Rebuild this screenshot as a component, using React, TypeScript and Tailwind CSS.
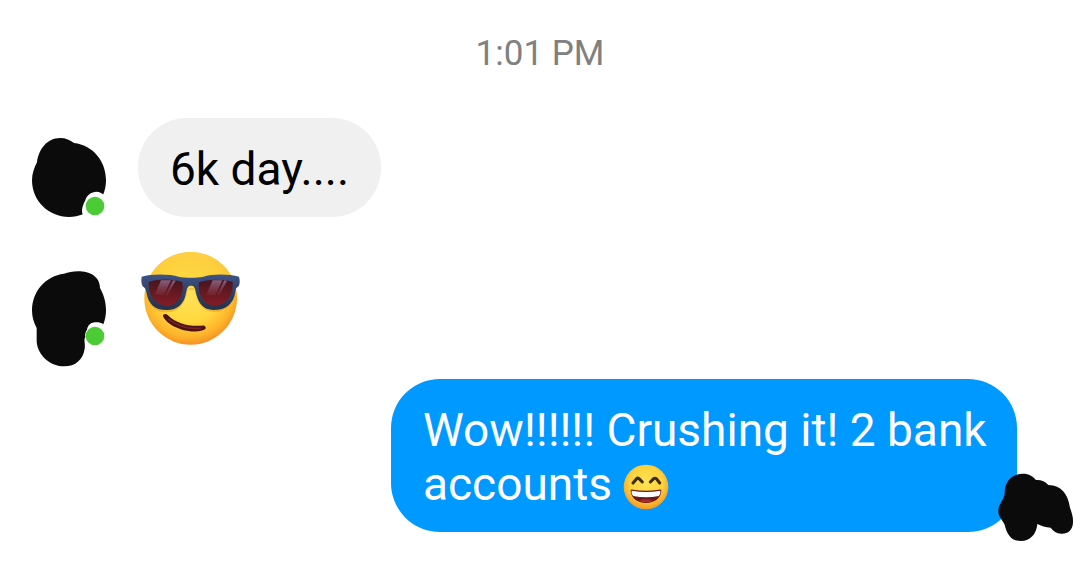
import type { ReactNode } from 'react';

function RoundAvatar() {
  return (
    <svg viewBox="36 36 222 240" className="w-[74px] h-20 shrink-0" role="img" aria-label="Contact, online">
      <path
        fill="#0b0b0b"
        d="M51 112C56 72 82 39 120 39C138 39 150 45 162 54C218 60 258 108 258 166C258 230 207 276 147 276C86 276 36 228 36 166C36 146 43 128 51 112Z"
      />
      <path fill="#fff" d="M196 226C201 208 215 201 229 200C239 200 246 205 251 209L262 220V280H186L188 268C184 258 186 244 196 226Z" />
      <circle cx="225" cy="243" r="28" fill="#4ccb36" />
    </svg>
  );
}

function LongAvatar() {
  return (
    <svg viewBox="36 30 222 294" className="w-[74px] h-[98px] shrink-0" role="img" aria-label="Contact, online">
      <path
        fill="#0b0b0b"
        d="M50 204C41 188 36 170 36 151C36 94 77 48 132 41C145 37 158 34 174 34C210 34 240 50 240 84C251 103 258 126 258 151C258 166 255 180 250 193C242 187 230 186 218 188C208 190 203 199 201 209C196 216 194 224 196 231C190 240 197 252 194 266C190 298 166 319 133 319C91 319 53 286 50 245Z"
      />
      <circle cx="225" cy="228" r="28" fill="#4ccb36" />
    </svg>
  );
}

function SentAvatar() {
  return (
    <svg viewBox="36 39 231 207" className="w-[77px] h-[69px]" role="img" aria-label="Seen">
      <path
        fill="#0b0b0b"
        d="M59 96C60 62 84 41 115 41C131 41 144 49 153 60C168 59 180 64 190 75C230 76 249 103 255 143C260 158 265 172 264 188C263 210 248 222 229 221C215 220 204 213 197 203C182 202 168 198 157 192C154 223 136 243 108 243C80 243 66 225 59 194C54 184 47 176 42 166C37 149 42 135 51 122C57 113 59 105 59 96Z"
      />
    </svg>
  );
}

function SunglassesEmoji() {
  return (
    <svg viewBox="24 15 306 288" className="w-[102px] h-24" role="img" aria-label="Smiling face with sunglasses">
      <defs>
        <radialGradient id="sunFace" cx="0.48" cy="0.42" r="0.6">
          <stop offset="0" stopColor="#ffe45c" />
          <stop offset="0.55" stopColor="#ffd83f" />
          <stop offset="0.82" stopColor="#fdb52b" />
          <stop offset="1" stopColor="#f58a20" />
        </radialGradient>
        <linearGradient id="sunTop" x1="0" y1="0" x2="0" y2="1">
          <stop offset="0" stopColor="#fdd045" />
          <stop offset="0.5" stopColor="#fccb2e" stopOpacity="0" />
        </linearGradient>
        <linearGradient id="lens" x1="0" y1="0" x2="0" y2="1">
          <stop offset="0" stopColor="#46151f" />
          <stop offset="1" stopColor="#851c24" />
        </linearGradient>
        <linearGradient id="frame" x1="0" y1="0" x2="0" y2="1">
          <stop offset="0" stopColor="#3d5488" />
          <stop offset="0.35" stopColor="#35456c" />
          <stop offset="1" stopColor="#27324a" />
        </linearGradient>
        <linearGradient id="glare" x1="0" y1="0" x2="0" y2="1">
          <stop offset="0" stopColor="#94749a" stopOpacity="0.8" />
          <stop offset="1" stopColor="#9b4a55" stopOpacity="0.2" />
        </linearGradient>
      </defs>
      <circle cx="182" cy="160" r="139" fill="url(#sunFace)" />
      <circle cx="182" cy="160" r="139" fill="url(#sunTop)" />
      <path
        fill="#d58b22"
        opacity="0.4"
        d="M46 134C51 172 68 202 111 202C145 202 166 178 173 136C179 126 190 126 195 136C202 178 220 201 252 201C289 201 312 174 318 134Z"
      />
      <path
        fill="url(#frame)"
        d="M35 95C62 86 120 86 146 95C164 99 202 99 220 95C245 86 300 87 327 95C330 105 330 116 326 124C319 127 317 132 316 140C311 176 288 195 250 195C220 195 205 175 198 145C195 124 190 122 183 122C175 122 171 127 168 144C162 178 142 195 111 195C72 195 55 176 49 140C47 132 44 127 38 124C34 116 33 105 35 95Z"
      />
      <path fill="url(#lens)" d="M56 111C84 101 132 101 157 112C163 143 147 181 112 182C75 181 55 151 56 111Z" />
      <path fill="url(#lens)" d="M207 112C233 101 282 102 308 111C310 151 289 181 253 182C219 181 202 143 207 112Z" />
      <path fill="url(#glare)" d="M93 106L123 106L101 151L75 148ZM129 106L137 107L112 151L106 151Z" />
      <path fill="url(#glare)" d="M248 106L277 106L256 151L229 149ZM283 106L291 108L267 151L261 151Z" />
      <path
        fill="#4a1416"
        d="M99 214C98 207 108 205 113 210C139 236 177 245 215 242C224 240 230 247 226 252C216 261 185 262 156 254C131 247 107 232 99 214Z"
      />
      <path d="M116 223Q158 254 211 250" fill="none" stroke="#79221d" strokeWidth="5" strokeLinecap="round" />
    </svg>
  );
}

function GrinEmoji() {
  return (
    <svg viewBox="26 25 138 138" className="inline-block w-[46px] h-[46px] align-[-10px]" role="img" aria-label="Grinning face">
      <defs>
        <radialGradient id="grinFace" cx="0.5" cy="0.4" r="0.62">
          <stop offset="0" stopColor="#ffe354" />
          <stop offset="0.6" stopColor="#fdd13c" />
          <stop offset="1" stopColor="#f29423" />
        </radialGradient>
      </defs>
      <circle cx="95" cy="94" r="67" fill="url(#grinFace)" />
      <path
        d="M56 82L67 69Q70 66 74 69L84 79M108 79L118 69Q122 66 126 69L136 82"
        fill="none"
        stroke="#3a2c18"
        strokeWidth="9"
        strokeLinecap="round"
        strokeLinejoin="round"
      />
      <path fill="#681b1b" d="M49 107C48 102 52 101 56 102C82 106 108 106 134 102C139 101 142 103 141 107C139 128 121 142 95 142C69 142 51 128 49 107Z" />
      <path fill="#fff" d="M52 105C80 110 110 110 138 105C139 112 137 117 133 121C108 126 82 126 57 121C53 117 51 112 52 105Z" />
      <path fill="#ae292b" d="M73 135Q95 127 117 135Q95 144 73 135Z" />
    </svg>
  );
}

function Bubble({ sent = false, children }: { sent?: boolean; children: ReactNode }) {
  return (
    <p
      className={`rounded-[49px] pl-8 pt-6 pb-[21px] text-[46px] leading-[54px] ${
        sent ? 'pr-6 bg-[#0099ff] text-white' : 'pr-8 bg-[#f0f0f0] text-black'
      }`}
    >
      {children}
    </p>
  );
}

export default function App() {
  return (
    <main className="bg-white py-[33px] font-[Roboto,sans-serif]">
      <time className="block text-center text-[35px] leading-[42px] text-[#808080]">1:01 PM</time>

      <div className="mt-[43px] flex items-end gap-8 pl-8">
        <RoundAvatar />
        <Bubble>6k day....</Bubble>
      </div>

      <div className="mt-[33px] flex items-end gap-8 pl-8">
        <LongAvatar />
        <div className="mb-[22px]">
          <SunglassesEmoji />
        </div>
      </div>

      <div className="relative mt-[11px] flex justify-end pl-8 pr-[63px]">
        <div className="max-w-[626px]">
          <Bubble sent>
            Wow!!!!!! Crushing it! 2 bank accounts <GrinEmoji />
          </Bubble>
        </div>
        <div className="absolute right-[6px] -bottom-[10px]">
          <SentAvatar />
        </div>
      </div>
    </main>
  );
}
